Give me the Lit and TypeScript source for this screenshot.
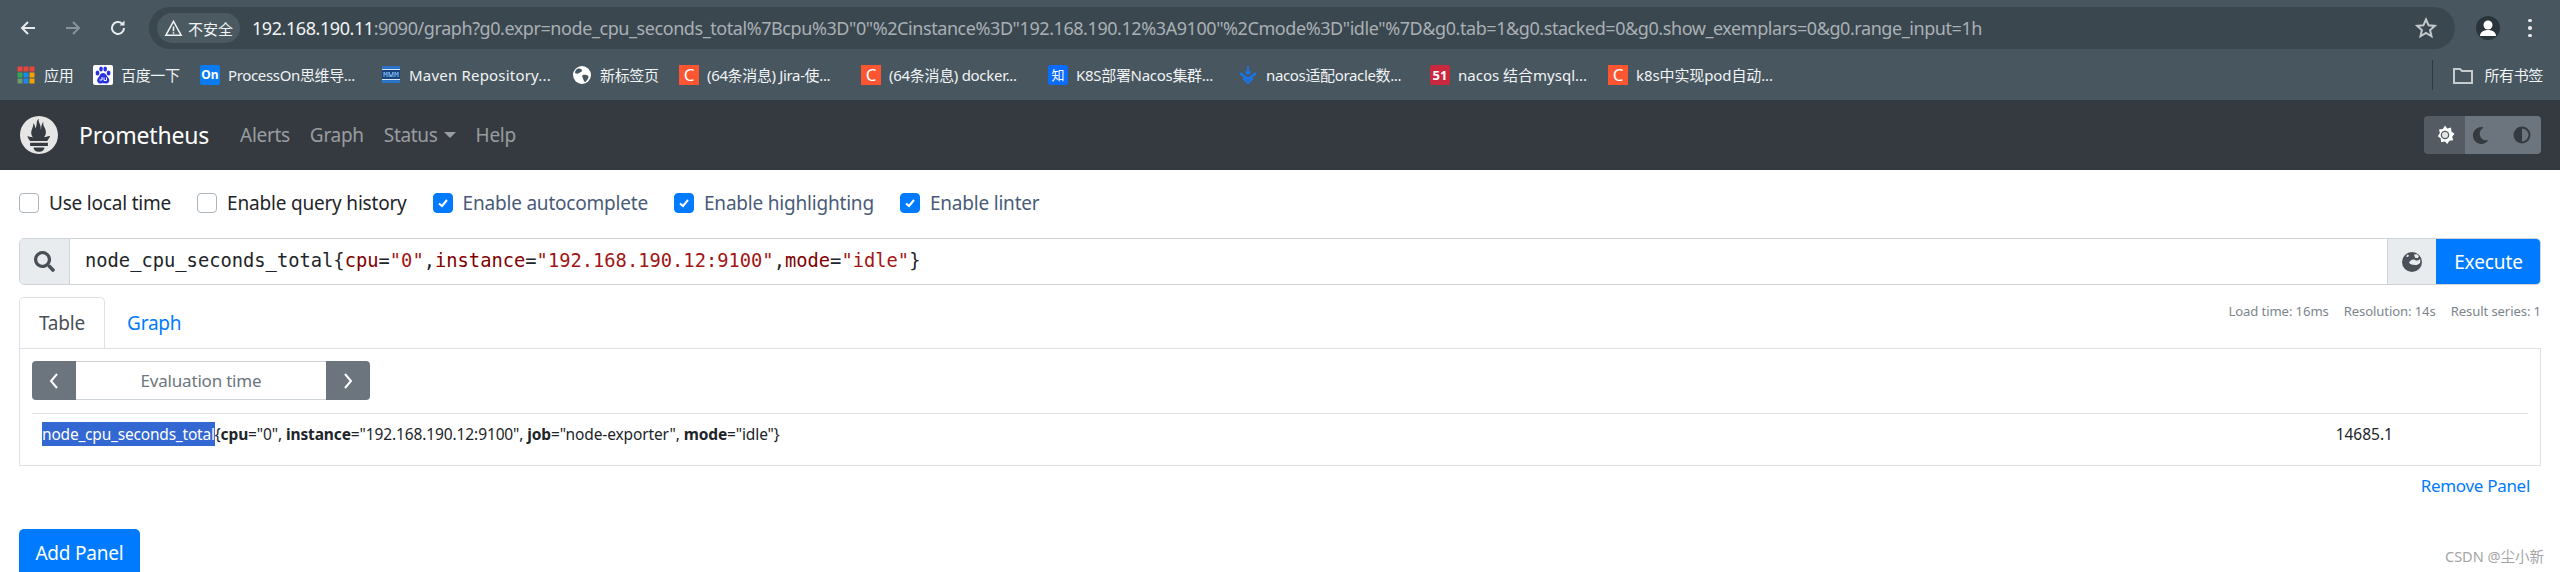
import { LitElement, html, css, svg } from "lit";
import { customElement } from "lit/decorators.js";

const marks = [
  { kind: "apps", text: "应用", w: 77, ls: -0.35 },
  { kind: "baidu", text: "百度一下", w: 107, ls: -0.35 },
  { kind: "on", text: "ProcessOn思维导...", w: 181, ls: -0.35 },
  { kind: "maven", text: "Maven Repository...", w: 191, ls: 0.2 },
  { kind: "globe", text: "新标签页", w: 107, ls: -0.35 },
  { kind: "c", text: "(64条消息) Jira-使...", w: 182, ls: -0.35 },
  { kind: "c", text: "(64条消息) docker...", w: 187, ls: -0.3 },
  { kind: "zhi", text: "K8S部署Nacos集群...", w: 190, ls: -0.3 },
  { kind: "nacos", text: "nacos适配oracle数...", w: 192, ls: -0.35 },
  { kind: "n51", text: "nacos 结合mysql...", w: 178, ls: 0 },
  { kind: "c", text: "k8s中实现pod自动...", w: 200, ls: -0.1 },
];

const APP_COLORS = [
  ["#e8453c", "#e8453c", "#e8453c"],
  ["#34a853", "#1a8ae8", "#f4a300"],
  ["#6f9a6a", "#1a8ae8", "#f4a300"],
];

function favicon(kind: string) {
  switch (kind) {
    case "apps":
      return html`<svg class="fav" viewBox="0 0 20 20">
        ${[0, 1, 2].map((r) =>
          [0, 1, 2].map(
            (c) => svg`<rect x=${1.5 + c * 6} y=${1.5 + r * 6} width="5" height="5" fill=${APP_COLORS[r][c]} />`
          )
        )}
      </svg>`;
    case "baidu":
      return html`<svg class="fav" viewBox="0 0 20 20">
        <rect width="20" height="20" rx="2" fill="#fff" />
        <g fill="#2932e1">
          <ellipse cx="4.500" cy="8" rx="1.900" ry="2.500" />
          <ellipse cx="8" cy="4" rx="1.800" ry="2.500" />
          <ellipse cx="12.200" cy="4" rx="1.800" ry="2.500" />
          <ellipse cx="15.600" cy="8" rx="1.900" ry="2.500" />
          <path d="M10 8c-3 0-3 3-5 5-2 3 0 6 3 5.500 1.500-.4 3-.4 4.500 0 3 .6 5-2.500 3-5.500-2-2-2.500-5-5.500-5z" />
        </g>
        <path d="M6.500 15h2.500v-3M11 12.500v3h2.500v-3" fill="none" stroke="#fff" stroke-width="1" />
      </svg>`;
    case "on":
      return html`<span class="fav tile on">On</span>`;
    case "maven":
      return html`<svg class="fav" viewBox="0 0 20 20">
        <rect x="1" y="1" width="18" height="3" fill="#2a73c9" />
        <rect x="1" y="4" width="18" height="1" fill="#d6e4f2" />
        <rect x="1" y="5" width="18" height="9" fill="#17457f" />
        <path d="M3 12V7l1.500 3L6 7v5M8 12V7l2 5 2-5v5M14 12V7l1.500 3L17 7v5" stroke="#7fb4ec" fill="none" stroke-width="1" />
        <rect x="1" y="14" width="18" height="1" fill="#d6e4f2" />
        <rect x="1" y="15" width="18" height="3" fill="#2a73c9" />
      </svg>`;
    case "globe":
      return html`<svg class="fav" viewBox="0 0 20 20">
        <circle cx="10" cy="10" r="9" fill="#fff" />
        <path d="M6 3.500c2 0 4 .5 4 2s-2 1.500-3 2.500-2 1-4 0c0-2 1-3.500 3-4.500zM11 10c2-.5 5 0 5.500 1.500S15 15 13.500 17c-1.500 0-2-2-2.500-3.500S9.500 10.500 11 10z" fill="#47565f" />
      </svg>`;
    case "c":
      return html`<span class="fav tile c">C</span>`;
    case "zhi":
      return html`<span class="fav tile zhi">知</span>`;
    case "nacos":
      return html`<svg class="fav" viewBox="0 0 20 20" fill="none" stroke="#1a73e8" stroke-width="2.200">
        <path d="M2 8l8 6 8-6M5 13l5 5 5-5" />
        <path d="M10 1v8M7.500 6.500l2.500 2.500 2.500-2.500" stroke-width="1.800" />
      </svg>`;
    default:
      return html`<span class="fav tile n51">51</span>`;
  }
}

const PROM_LOGO =
  "M56.700 0C25.400 0 0 25.400 0 56.700s25.400 56.700 56.700 56.700 56.700-25.400 56.700-56.700S88 0 56.700 0zm0 106.900c-8.900 0-16.100-5.900-16.100-13.200h32.200c0 7.300-7.200 13.200-16.100 13.200zm26.600-17.700H30.100v-9.700h53.200v9.700zm-.2-14.600H30.200c-.2-.2-.4-.4-.5-.6-5.400-6.600-6.700-10-7.900-13.400-.1-.1 6.600 1.300 11.200 2.400 0 0 2.400.5 5.800 1.200-3.300-3.900-5.300-8.900-5.300-14 0-11.200 8.600-21 5.500-28.900 3 .2 6.200 6.300 6.400 15.800 3.200-4.400 4.500-12.400 4.500-17.300 0-5.100 3.400-11 6.700-11.200-3 4.900.8 9.100 4.100 19.600 1.300 3.900 1.100 10.500 2.100 14.700.3-8.700 1.800-21.400 7.300-25.800-2.400 5.500.4 12.400 2.300 15.700 3 5.200 4.800 9.200 4.800 16.700 0 5-1.900 9.700-5 13.400 3.600-.7 6.100-1.300 6.100-1.300l11.700-2.300s-1.700 7-8.200 14z";

@customElement("app-root")
export class AppRoot extends LitElement {
  static styles = css`
    :host {
      display: block;
      height: 572px;
      overflow: hidden;
      background: #fff;
      font-family: "Noto Sans", "Noto Sans CJK SC", sans-serif;
      color: #212529;
    }
    svg { display: block; }

    /* browser chrome */
    .toolbar { height: 49px; background: #47565f; box-sizing: border-box; padding: 7px 0 0 0; display: flex; }
    .navbtns { width: 149px; height: 42px; display: flex; align-items: center; padding-left: 19px; box-sizing: border-box; gap: 27px; flex: none; }
    .navbtns svg { width: 18px; height: 18px; }
    .omnibox { width: 2306px; height: 42px; flex: none; border-radius: 21px; background: #3b474f; display: flex; align-items: center; padding-left: 8px; box-sizing: border-box; position: relative; }
    .secure { height: 30px; width: 83px; border-radius: 15px; background: #4b5961; display: flex; align-items: center; gap: 5px; padding-left: 7px; box-sizing: border-box; color: #f1f3f4; font-size: 15px; flex: none; }
    .secure svg { width: 19px; height: 19px; }
    .url { margin-left: 12px; font-size: 18px; color: #a9b0b5; white-space: nowrap; letter-spacing: -0.43px; }
    .url b { font-weight: 400; color: #f1f3f4; }
    .star { position: absolute; right: 18px; top: 10px; width: 22px; height: 22px; }
    .tools { flex: 1; display: flex; align-items: center; height: 42px; padding-left: 21px; gap: 28px; }
    .avatar { width: 24px; height: 24px; border-radius: 50%; background: #2b343a; overflow: hidden; }
    .dots { width: 4px; display: flex; flex-direction: column; gap: 4px; }
    .dots i { width: 3.500px; height: 3.500px; border-radius: 50%; background: #e8eaed; display: block; }

    .bookmarks { height: 51px; background: #47565f; display: flex; align-items: center; padding-left: 16px; color: #f1f3f4; font-size: 15px; white-space: nowrap; position: relative; }
    .mark { display: flex; align-items: center; gap: 8px; flex: none; }
    .fav { width: 20px; height: 20px; flex: none; }
    .tile { display: flex; align-items: center; justify-content: center; border-radius: 2px; color: #fff; font-weight: 700; letter-spacing: 0; line-height: 20px; }
    .on { background: #0b7bf2; font-size: 12px; }
    .c { background: #fc5531; font-size: 17px; font-weight: 400; border-radius: 0; }
    .zhi { background: #0a6cff; font-size: 13px; font-weight: 400; border-radius: 3px; }
    .n51 { background: #c9283e; font-size: 13px; }
    .allmarks { margin-left: auto; display: flex; align-items: center; height: 30px; padding-right: 17px; gap: 10px; letter-spacing: -0.35px; }
    .sep { width: 1px; height: 30px; background: #2f3a41; margin-right: 9px; }
    .allmarks svg { width: 22px; height: 22px; }

    /* prometheus navbar */
    .navbar { height: 70px; background: #343a40; display: flex; align-items: center; padding: 0 19px 0 20px; }
    .logo { width: 38px; height: 38px; flex: none; margin-right: 21px; }
    .brand { font-size: 23px; color: #fff; margin-right: 31px; letter-spacing: -0.2px; }
    .navlink { font-size: 19px; color: rgba(255,255,255,.5); margin-right: 20px; display: flex; align-items: center; gap: 6px; letter-spacing: -0.3px; }
    .caret { width: 0; height: 0; border-top: 6px solid rgba(255,255,255,.5); border-left: 6px solid transparent; border-right: 6px solid transparent; }
    .themes { margin-left: auto; display: flex; height: 38px; border-radius: 4px; overflow: hidden; }
    .themes div { width: 38px; display: flex; align-items: center; justify-content: center; background: #6c757d; }
    .themes div.active { background: #545b62; width: 41px; }
    .themes svg { width: 20px; height: 20px; }
    .themes svg.moon { width: 17px; height: 17px; margin-right: 8px; }

    /* content */
    .content { padding: 0 19px; }
    .opts { display: flex; align-items: center; height: 20px; margin-top: 23px; font-size: 19px; letter-spacing: -0.2px; }
    .opt { display: flex; align-items: center; gap: 10px; margin-right: 26px; color: #212529; line-height: 20px; }
    .opt.on-state { color: #495b78; }
    .box { width: 20px; height: 20px; box-sizing: border-box; border: 1px solid #adb5bd; border-radius: 4px; background: #fff; flex: none; }
    .box.checked { background: #007bff; border-color: #007bff; display: flex; align-items: center; justify-content: center; }
    .box svg { width: 12px; height: 12px; }

    .query { margin-top: 25px; height: 47px; display: flex; border: 1px solid #ced4da; border-radius: 5px; box-sizing: border-box; overflow: hidden; }
    .addon { background: #e9ecef; display: flex; align-items: center; justify-content: center; flex: none; }
    .addon.search { width: 50px; border-right: 1px solid #ced4da; box-sizing: border-box; }
    .addon.search svg { width: 21px; height: 21px; }
    .expr { flex: 1; display: flex; align-items: center; padding-left: 15px; font: 18.750px/1 "DejaVu Sans Mono", monospace; color: #212529; white-space: pre; }
    .ln { color: #800000; }
    .st { color: #a31515; }
    .addon.globe { width: 49px; border-left: 1px solid #ced4da; box-sizing: border-box; }
    .addon.globe svg { width: 20px; height: 20px; }
    .exec { width: 105px; margin: -1px -1px -1px 0; background: #007bff; color: #fff; font-size: 19px; display: flex; align-items: center; justify-content: center; flex: none; letter-spacing: -0.1px; }

    .tabrow { display: flex; height: 51px; margin-top: 12px; align-items: stretch; position: relative; }
    .tab { font-size: 19px; display: flex; align-items: center; box-sizing: border-box; letter-spacing: -0.2px; }
    .tab.active { width: 86px; justify-content: center; border: 1px solid #dee2e6; border-bottom: 0; border-radius: 5px 5px 0 0; color: #495057; background: #fff; position: relative; z-index: 1; }
    .tab.link { color: #007bff; margin-left: 22px; }
    .stats { margin-left: auto; display: flex; gap: 15px; font-size: 13.100px; color: #7c858c; padding-top: 5px; height: 18px; line-height: 18px; align-items: center; letter-spacing: -0.1px; }

    .panel { height: 118px; box-sizing: border-box; border: 1px solid #dee2e6; margin-top: 0; padding: 12px 12px 0 12px; }
    .evalrow { display: flex; width: 338px; height: 39px; }
    .ebtn { width: 44px; background: #6c757d; display: flex; align-items: center; justify-content: center; flex: none; }
    .ebtn.l { border-radius: 4px 0 0 4px; }
    .ebtn.r { border-radius: 0 4px 4px 0; }
    .ebtn svg { width: 14px; height: 20px; }
    .einput { flex: 1; border-top: 1px solid #ced4da; border-bottom: 1px solid #ced4da; box-sizing: border-box; color: #6c757d; font-size: 17px; display: flex; align-items: center; justify-content: center; letter-spacing: -0.2px; }
    .row { margin-top: 13px; border-top: 1px solid #dee2e6; height: 40px; display: flex; align-items: center; padding: 0 10px; font-size: 15.500px; letter-spacing: -0.12px; position: relative; color: #212529; white-space: pre; }
    .row b { font-weight: 700; }
    .sel { background: #3367d1; color: #fff; height: 24px; line-height: 24px; display: inline-block; letter-spacing: -0.2px; }
    .val { margin-left: auto; margin-right: 125px; font-size: 15.500px; letter-spacing: 0; }

    .remove { text-align: right; color: #007bff; font-size: 17px; padding: 8px 11px 0 0; height: 24px; line-height: 24px; letter-spacing: -0.3px; }
    .add { margin-top: 31px; width: 121px; height: 48px; border-radius: 5px; background: #007bff; color: #fff; font-size: 19px; display: flex; align-items: center; justify-content: center; letter-spacing: -0.2px; }
    .watermark { position: absolute; left: 2445px; top: 546px; font-size: 14.500px; color: #a5a5a5; line-height: 20px; white-space: nowrap; }
  `;

  render() {
    return html`
      <div class="toolbar">
        <div class="navbtns">
          <svg viewBox="0 0 18 18" fill="none" stroke="#e8eaed" stroke-width="2"><path d="M16 9H3M9 3L3 9l6 6" /></svg>
          <svg viewBox="0 0 18 18" fill="none" stroke="#87929a" stroke-width="2"><path d="M2 9h13M9 3l6 6-6 6" /></svg>
          <svg viewBox="0 0 18 18" fill="none" stroke="#e8eaed" stroke-width="2"><path d="M15 9a6 6 0 1 1-1.800-4.300" /><path d="M15.500 1.500v5h-5z" fill="#e8eaed" stroke="none" /></svg>
        </div>
        <div class="omnibox">
          <div class="secure">
            <svg viewBox="0 0 20 20" fill="none" stroke="#f1f3f4" stroke-width="1.600"><path d="M10 2.500L18 17H2z" /><path d="M10 8v5M10 14v1.500" /></svg>
            不安全
          </div>
          <div class="url"><b>192.168.190.11</b>:9090/graph?g0.expr=node_cpu_seconds_total%7Bcpu%3D"0"%2Cinstance%3D"192.168.190.12%3A9100"%2Cmode%3D"idle"%7D&amp;g0.tab=1&amp;g0.stacked=0&amp;g0.show_exemplars=0&amp;g0.range_input=1h</div>
          <svg class="star" viewBox="0 0 22 22" fill="none" stroke="#c4c9cc" stroke-width="2"><path d="M11 2.500l2.600 5.800 6.200.6-4.700 4.200 1.400 6.200L11 16l-5.500 3.300 1.400-6.200L2.200 8.900l6.200-.6z" /></svg>
        </div>
        <div class="tools">
          <div class="avatar"><svg viewBox="0 0 24 24" fill="#fff"><circle cx="12" cy="9" r="4.500" /><path d="M4 20c0-4 4-6 8-6s8 2 8 6z" /></svg></div>
          <div class="dots"><i></i><i></i><i></i></div>
        </div>
      </div>
      <div class="bookmarks">
        ${marks.map(
          (m) => html`<div class="mark" style="width:${m.w}px;letter-spacing:${m.ls}px">${favicon(m.kind)}<span>${m.text}</span></div>`
        )}
        <div class="allmarks">
          <div class="sep"></div>
          <svg viewBox="0 0 22 22" fill="none" stroke="#c6cbce" stroke-width="2"><path d="M2 5h6l2 2h10v12H2z" /></svg>
          <span>所有书签</span>
        </div>
      </div>
      <div class="navbar">
        <svg class="logo" viewBox="0 0 113.400 113.400"><path fill="#e6e6e6" d=${PROM_LOGO} /></svg>
        <span class="brand">Prometheus</span>
        <span class="navlink">Alerts</span>
        <span class="navlink">Graph</span>
        <span class="navlink">Status<i class="caret"></i></span>
        <span class="navlink">Help</span>
        <div class="themes">
          <div class="active"><svg viewBox="0 0 20 20"><path fill="#fff" d="M10 .5l2.300 3 3.700-1 .4 3.900 3.100 2.300-2.300 3 1 3.600-3.800.5-2.100 3.200-2.300-2.500-3.900.7-.3-3.800-3-2.200 2.100-3.100-.9-3.700 3.800-.4z" /><circle cx="10" cy="10" r="4.300" fill="#545b62" /><circle cx="10" cy="10" r="3" fill="#e4e4e4" /></svg></div>
          <div><svg class="moon" viewBox="0 0 512 512"><path fill="#343a40" d="M283.211 512c78.962 0 151.079-35.925 198.857-94.792 7.068-8.708-.639-21.430-11.562-19.350-124.203 23.654-238.262-71.576-238.262-196.954 0-72.222 38.662-138.635 101.498-174.394 9.686-5.512 7.250-20.197-3.756-22.230A258.156 258.156 0 0 0 283.211 0c-141.309 0-256 114.511-256 256 0 141.309 114.511 256 256 256z" /></svg></div>
          <div><svg viewBox="0 0 20 20"><circle cx="10" cy="10" r="8.500" fill="#343a40" /><path fill="#6c757d" d="M10 3.500a6.500 6.500 0 0 1 0 13z" /></svg></div>
        </div>
      </div>
      <div class="content">
        <div class="opts">
          <label class="opt"><span class="box"></span>Use local time</label>
          <label class="opt"><span class="box"></span>Enable query history</label>
          ${["Enable autocomplete", "Enable highlighting", "Enable linter"].map(
            (t) => html`<label class="opt on-state"><span class="box checked"><svg viewBox="0 0 12 12" fill="none" stroke="#fff" stroke-width="2"><path d="M2 6.500L5 9l5-6" /></svg></span>${t}</label>`
          )}
        </div>
        <div class="query">
          <div class="addon search"><svg viewBox="0 0 512 512"><path fill="#495057" d="M505 442.700L405.300 343c-4.500-4.500-10.600-7-17-7H372c27.600-35.300 44-79.700 44-128C416 93.100 322.900 0 208 0S0 93.100 0 208s93.100 208 208 208c48.300 0 92.700-16.400 128-44v16.300c0 6.400 2.500 12.500 7 17l99.700 99.700c9.400 9.400 24.600 9.400 33.900 0l28.300-28.300c9.400-9.400 9.400-24.600.1-34zM208 336c-70.700 0-128-57.200-128-128 0-70.700 57.200-128 128-128 70.700 0 128 57.200 128 128 0 70.700-57.200 128-128 128z" /></svg></div>
          <div class="expr">node_cpu_seconds_total{<span class="ln">cpu</span>=<span class="st">"0"</span>,<span class="ln">instance</span>=<span class="st">"192.168.190.12:9100"</span>,<span class="ln">mode</span>=<span class="st">"idle"</span>}</div>
          <div class="addon globe"><svg viewBox="0 0 20 20"><circle cx="10" cy="10" r="10" fill="#495057" /><path fill="#e9ecef" d="M12 2.500l3-.3 2 2-1.500 2-2.500-.5zM7 10.500c1-2 3-3.500 5-3 1.500.3 2 1.500 3.500 1 1-.3 2-1 2.500-1.500.4 1 .5 2.500.3 3.500-1.300 2-3.300 2.500-5.300 2.500-2.500 0-5-.7-6-2.500zM4 4.500l2 .5 1-1.500-1.500-1z" /></svg></div>
          <div class="exec">Execute</div>
        </div>
        <div class="tabrow">
          <div class="tab active">Table</div>
          <div class="tab link">Graph</div>
          <div class="stats"><span>Load time: 16ms</span><span>Resolution: 14s</span><span>Result series: 1</span></div>
        </div>
        <div class="panel">
          <div class="evalrow">
            <div class="ebtn l"><svg viewBox="0 0 14 20" fill="none" stroke="#fff" stroke-width="2"><path d="M10 3L4 10l6 7" /></svg></div>
            <div class="einput">Evaluation time</div>
            <div class="ebtn r"><svg viewBox="0 0 14 20" fill="none" stroke="#fff" stroke-width="2"><path d="M4 3l6 7-6 7" /></svg></div>
          </div>
          <div class="row"><span class="sel">node_cpu_seconds_total</span><span>{<b>cpu</b>="0", <b>instance</b>="192.168.190.12:9100", <b>job</b>="node-exporter", <b>mode</b>="idle"}</span><span class="val">14685.1</span></div>
        </div>
        <div class="remove">Remove Panel</div>
        <div class="add">Add Panel</div>
      </div>
      <div class="watermark">CSDN @尘小新</div>
    `;
  }
}
